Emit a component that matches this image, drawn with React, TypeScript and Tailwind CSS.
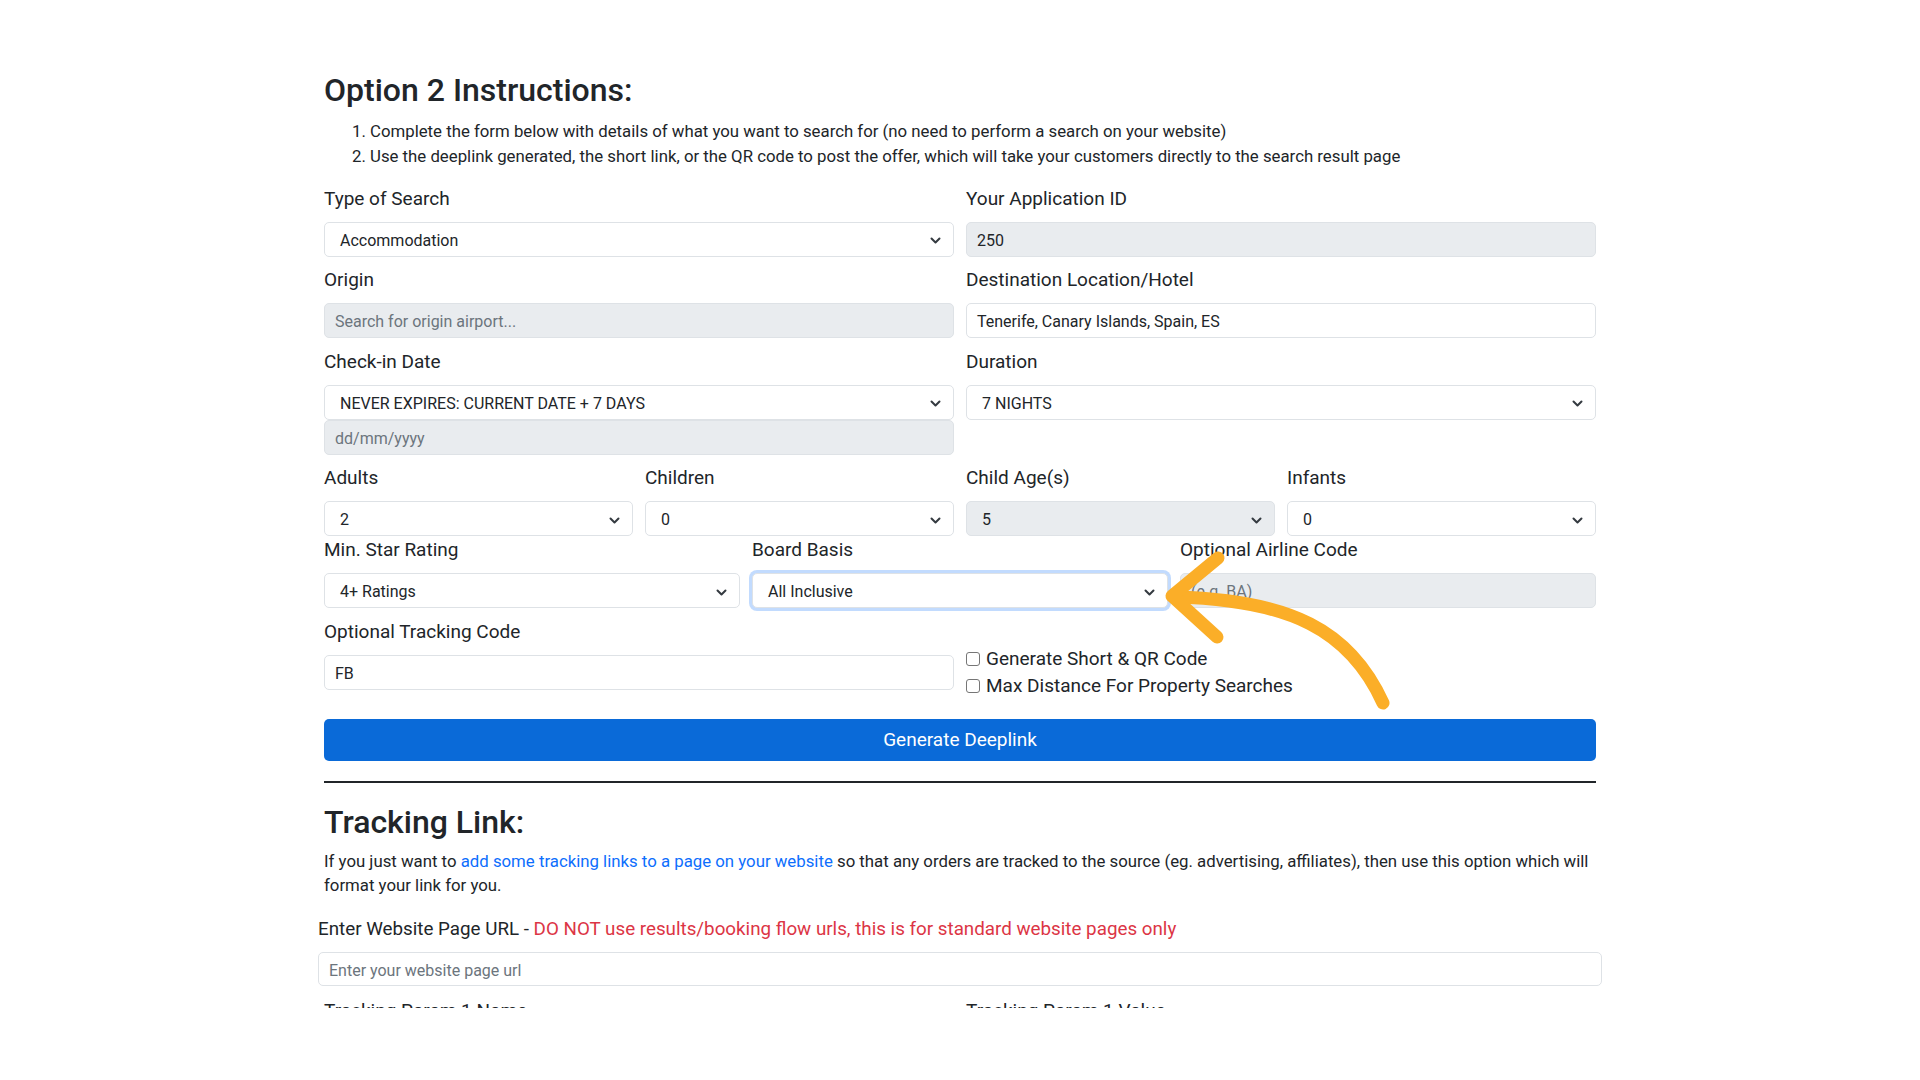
import React from 'react';

const font = "font-['Roboto','Liberation_Sans',sans-serif]";

const Chevron = () => (
  <svg width="11" height="7" viewBox="0 0 11 7" className="shrink-0">
    <polyline
      points="1.5,1.5 5.5,5.5 9.5,1.5"
      fill="none"
      stroke="#343a40"
      strokeWidth="2"
      strokeLinecap="round"
      strokeLinejoin="round"
    />
  </svg>
);

const Label = ({ children }: { children: React.ReactNode }) => (
  <div className="text-[19px] leading-[28.5px] text-[#212529] mb-[8.5px] whitespace-nowrap">
    {children}
  </div>
);

const Select = ({
  value,
  disabled,
  focused,
}: {
  value: string;
  disabled?: boolean;
  focused?: boolean;
}) => (
  <div
    className={[
      'h-[35px] flex items-center justify-between pt-[3px] pl-[15px] pr-[12px] rounded-[5px] border text-[16px] text-[#212529]',
      disabled ? 'bg-[#e9ecef] border-[#dee2e6]' : 'bg-white border-[#dee2e6]',
      focused ? 'border-[#86b7fe] shadow-[0_0_0_3px_rgba(13,110,253,0.25)]' : '',
    ].join(' ')}
  >
    <span>{value}</span>
    <Chevron />
  </div>
);

const Input = ({
  value,
  placeholder,
  disabled,
  h = 'h-[35px]',
}: {
  value?: string;
  placeholder?: string;
  disabled?: boolean;
  h?: string;
}) => (
  <div
    className={[
      h,
      'flex items-center pt-[3px] px-[10px] rounded-[5px] border text-[16px]',
      disabled ? 'bg-[#e9ecef] border-[#dee2e6]' : 'bg-white border-[#dee2e6]',
      value ? 'text-[#212529]' : 'text-[#6c757d]',
    ].join(' ')}
  >
    {value || placeholder}
  </div>
);

const Field = ({
  label,
  children,
  className = 'mb-[9.5px]',
}: {
  label: string;
  children: React.ReactNode;
  className?: string;
}) => (
  <div className={className}>
    <Label>{label}</Label>
    {children}
  </div>
);

const Check = ({ label }: { label: string }) => (
  <div className="flex items-center gap-[6px] h-[27px] text-[19px] text-[#212529]">
    <span className="w-[14px] h-[14px] border border-[#767676] rounded-[3px] bg-white" />
    <span>{label}</span>
  </div>
);

const Arrow = () => (
  <svg
    className="absolute left-0 top-0 pointer-events-none"
    width="1920"
    height="1080"
    viewBox="0 0 1920 1080"
  >
    <g
      fill="none"
      stroke="#fbae28"
      strokeWidth="13"
      strokeLinecap="round"
      strokeLinejoin="round"
    >
      <path d="M1383 703 C1350 630 1290 600 1176 597" />
      <polyline points="1218,558 1172,596 1217,637" />
    </g>
  </svg>
);

export default function App() {
  return (
    <div className={`relative w-full h-[1080px] bg-white overflow-hidden ${font}`}>
      <div className="h-[1008px] overflow-hidden">
        <div className="ml-[324px] w-[1272px] pt-[69px] text-[#212529]">
          <h2 className="text-[32px] leading-[42px] font-medium mb-[8px]">
            Option 2 Instructions:
          </h2>
          <ol className="list-decimal pl-[46px] text-[16.8px] leading-[24.5px] mb-[16.5px]">
            <li>
              Complete the form below with details of what you want to search for (no need to
              perform a search on your website)
            </li>
            <li>
              Use the deeplink generated, the short link, or the QR code to post the offer, which
              will take your customers directly to the search result page
            </li>
          </ol>

          <div className="grid grid-cols-2 gap-x-[12px]">
            <Field label="Type of Search">
              <Select value="Accommodation" />
            </Field>
            <Field label="Your Application ID">
              <Input value="250" disabled />
            </Field>
            <Field label="Origin">
              <Input placeholder="Search for origin airport..." disabled />
            </Field>
            <Field label="Destination Location/Hotel">
              <Input value="Tenerife, Canary Islands, Spain, ES" />
            </Field>
            <Field label="Check-in Date">
              <Select value="NEVER EXPIRES: CURRENT DATE + 7 DAYS" />
              <Input placeholder="dd/mm/yyyy" disabled />
            </Field>
            <Field label="Duration">
              <Select value="7 NIGHTS" />
            </Field>
          </div>

          <div className="grid grid-cols-4 gap-x-[12px]">
            <Field label="Adults" className="">
              <Select value="2" />
            </Field>
            <Field label="Children" className="">
              <Select value="0" />
            </Field>
            <Field label="Child Age(s)" className="">
              <Select value="5" disabled />
            </Field>
            <Field label="Infants" className="">
              <Select value="0" />
            </Field>
          </div>

          <div className="grid grid-cols-3 gap-x-[12px]">
            <Field label="Min. Star Rating">
              <Select value="4+ Ratings" />
            </Field>
            <Field label="Board Basis">
              <Select value="All Inclusive" focused />
            </Field>
            <Field label="Optional Airline Code">
              <Input placeholder="(e.g. BA)" disabled />
            </Field>
          </div>

          <div className="grid grid-cols-2 gap-x-[12px]">
            <Field label="Optional Tracking Code" className="">
              <Input value="FB" />
            </Field>
            <div className="pt-[28px]">
              <Check label="Generate Short & QR Code" />
              <Check label="Max Distance For Property Searches" />
            </div>
          </div>

          <button className="mt-[19.5px] w-full h-[42px] rounded-[5px] bg-[#0a6ad8] text-white text-[19px]">
            Generate Deeplink
          </button>

          <div className="mt-[20px] h-[2px] bg-[#212529]" />

          <h2 className="mt-[18px] text-[32px] leading-[42px] font-medium mb-[6px]">
            Tracking Link:
          </h2>
          <p className="text-[16.8px] leading-[24.4px]">
            If you just want to{' '}
            <span className="text-[#0d6efd]">add some tracking links to a page on your website</span>{' '}
            so that any orders are tracked to the source (eg. advertising, affiliates), then use
            this option which will
            <br />
            format your link for you.
          </p>

          <div className="-mx-[6px] mt-[17px]">
            <div className="text-[18.8px] leading-[28.5px] mb-[9px] whitespace-nowrap">
              Enter Website Page URL -{' '}
              <span className="text-[#dc3545]">
                DO NOT use results/booking flow urls, this is for standard website pages only
              </span>
            </div>
            <Input placeholder="Enter your website page url" h="h-[34px]" />
          </div>

          <div className="grid grid-cols-2 gap-x-[12px] mt-[11px]">
            <Label>Tracking Param 1 Name</Label>
            <Label>Tracking Param 1 Value</Label>
          </div>
        </div>
      </div>
      <Arrow />
    </div>
  );
}
